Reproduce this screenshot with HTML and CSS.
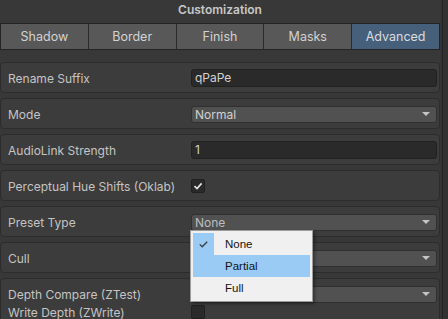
FILE: index.html
```html
<!DOCTYPE html>
<html lang="en">
<head>
    <meta charset="UTF-8">
    <title>Customization</title>
    <link rel="stylesheet" href="styles.css">
</head>
<body>
<div class="window">
    <div class="panel">
        <div class="titulo">Customization</div>

        <div class="tabs">
            <div class="tab">Shadow</div>
            <div class="tab">Border</div>
            <div class="tab">Finish</div>
            <div class="tab">Masks</div>
            <div class="tab active">Advanced</div>
        </div>

        <div class="rows">
            <div class="row">
                <div class="line">
                    <span class="label">Rename Suffix</span>
                    <div class="field">qPaPe</div>
                </div>
            </div>
            <div class="row">
                <div class="line">
                    <span class="label">Mode</span>
                    <div class="dropdown">Normal<span class="arrow"></span></div>
                </div>
            </div>
            <div class="row">
                <div class="line">
                    <span class="label">AudioLink Strength</span>
                    <div class="field">1</div>
                </div>
            </div>
            <div class="row">
                <div class="line">
                    <span class="label">Perceptual Hue Shifts (Oklab)</span>
                    <div class="checkbox">
                        <svg width="10" height="10" viewBox="0 0 10 10"><path d="M1.5 5.2 L4 7.5 L8.6 2.4" fill="none" stroke="#e6e6e6" stroke-width="1.6"/></svg>
                    </div>
                </div>
            </div>
            <div class="row">
                <div class="line">
                    <span class="label">Preset Type</span>
                    <div class="dropdown dim">None<span class="arrow"></span></div>
                </div>
            </div>
            <div class="row">
                <div class="line">
                    <span class="label">Cull</span>
                    <div class="dropdown"><span class="arrow"></span></div>
                </div>
            </div>
            <div class="row">
                <div class="line">
                    <span class="label">Depth Compare (ZTest)</span>
                    <div class="dropdown"><span class="arrow"></span></div>
                </div>
                <div class="line second">
                    <span class="label">Write Depth (ZWrite)</span>
                    <div class="checkbox"></div>
                </div>
            </div>
        </div>

        <div class="popup">
            <div class="item">
                <span class="check selected">
                    <svg width="9" height="7" viewBox="0 0 9 7"><path d="M0.8 3.4 L3.2 5.8 L8.2 0.8" fill="none" stroke="#3c3c3c" stroke-width="1.3"/></svg>
                </span>
                <span class="item-text">None</span>
            </div>
            <div class="item hover">
                <span class="check"></span>
                <span class="item-text">Partial</span>
            </div>
            <div class="item">
                <span class="check"></span>
                <span class="item-text">Full</span>
            </div>
        </div>
    </div>
    <div class="scrollbar"></div>
</div>
</body>
</html>
```

FILE: styles.css
```css
body {
    margin: 0;
    background-color: #383838;
    font-family: Inter, "Noto Sans", sans-serif;
    font-size: 12px;
    color: #c4c4c4;
    overflow: hidden;
}

.window {
    display: flex;
    height: 319px;
    overflow: hidden;
}

.panel {
    position: relative;
    width: 440px;
}

.titulo {
    height: 23px;
    line-height: 19px;
    text-align: center;
    font-weight: 600;
    color: #c8c8c8;
}

.tabs {
    display: flex;
    height: 27px;
    box-sizing: border-box;
    border: 1px solid #242424;
}

.tab {
    flex: 1;
    display: flex;
    align-items: center;
    justify-content: center;
    background-color: #585858;
    border-right: 1px solid #2b2b2b;
    color: #d2d2d2;
    font-size: 12.5px;
}

.tab:last-child {
    border-right: 0;
}

.tab.active {
    background-color: #46607c;
    color: #dcdcdc;
}

.rows {
    display: flex;
    flex-direction: column;
    gap: 5px;
    margin-top: 12px;
}

.row {
    border: 1px solid #2c2c2c;
    border-radius: 4px;
    background-color: #3c3c3c;
    padding: 6px 2px 5px 6px;
}

.line {
    display: flex;
    align-items: center;
    height: 18px;
}

.line.second {
    margin-top: 0;
}

.label {
    width: 183px;
    flex-shrink: 0;
    white-space: nowrap;
    padding-left: 1px;
}

.field {
    flex: 1;
    height: 18px;
    box-sizing: border-box;
    background-color: #2a2a2a;
    border: 1px solid #212121;
    border-radius: 3px;
    padding-left: 3px;
    line-height: 16px;
    color: #d2d2d2;
}

.dropdown {
    position: relative;
    flex: 1;
    height: 17px;
    box-sizing: border-box;
    background-color: #515151;
    border: 1px solid #303030;
    border-radius: 3px;
    padding-left: 3px;
    line-height: 15px;
    color: #d2d2d2;
}

.dropdown.dim {
    color: #bdbdbd;
}

.arrow {
    position: absolute;
    right: 6px;
    top: 5px;
    width: 0;
    height: 0;
    border-left: 4px solid transparent;
    border-right: 4px solid transparent;
    border-top: 4px solid #c4c4c4;
}

.checkbox {
    width: 14px;
    height: 14px;
    box-sizing: border-box;
    background-color: #2a2a2a;
    border: 1px solid #202020;
    border-radius: 2px;
    display: flex;
    align-items: center;
    justify-content: center;
}

.scrollbar {
    width: 8px;
    background-color: #313131;
    border-left: 2px solid #333333;
    box-sizing: border-box;
    box-shadow: inset 1px 0 0 #232323;
}

.popup {
    position: absolute;
    left: 190px;
    top: 230px;
    width: 123px;
    box-sizing: border-box;
    background-color: #f0f0f0;
    border: 1px solid #9c9c9c;
    padding: 2px;
    box-shadow: 2px 2px 3px rgba(0, 0, 0, 0.35);
    font-family: "Liberation Sans", Arial, sans-serif;
    font-size: 11.5px;
    color: #141414;
}

.item {
    display: flex;
    align-items: center;
    height: 22px;
}

.item.hover {
    background-color: #99cbf4;
}

.check {
    width: 21px;
    height: 22px;
    display: flex;
    align-items: center;
    justify-content: center;
}

.check.selected {
    background-color: #99cbf4;
}

.item-text {
    padding-left: 11px;
}
```
